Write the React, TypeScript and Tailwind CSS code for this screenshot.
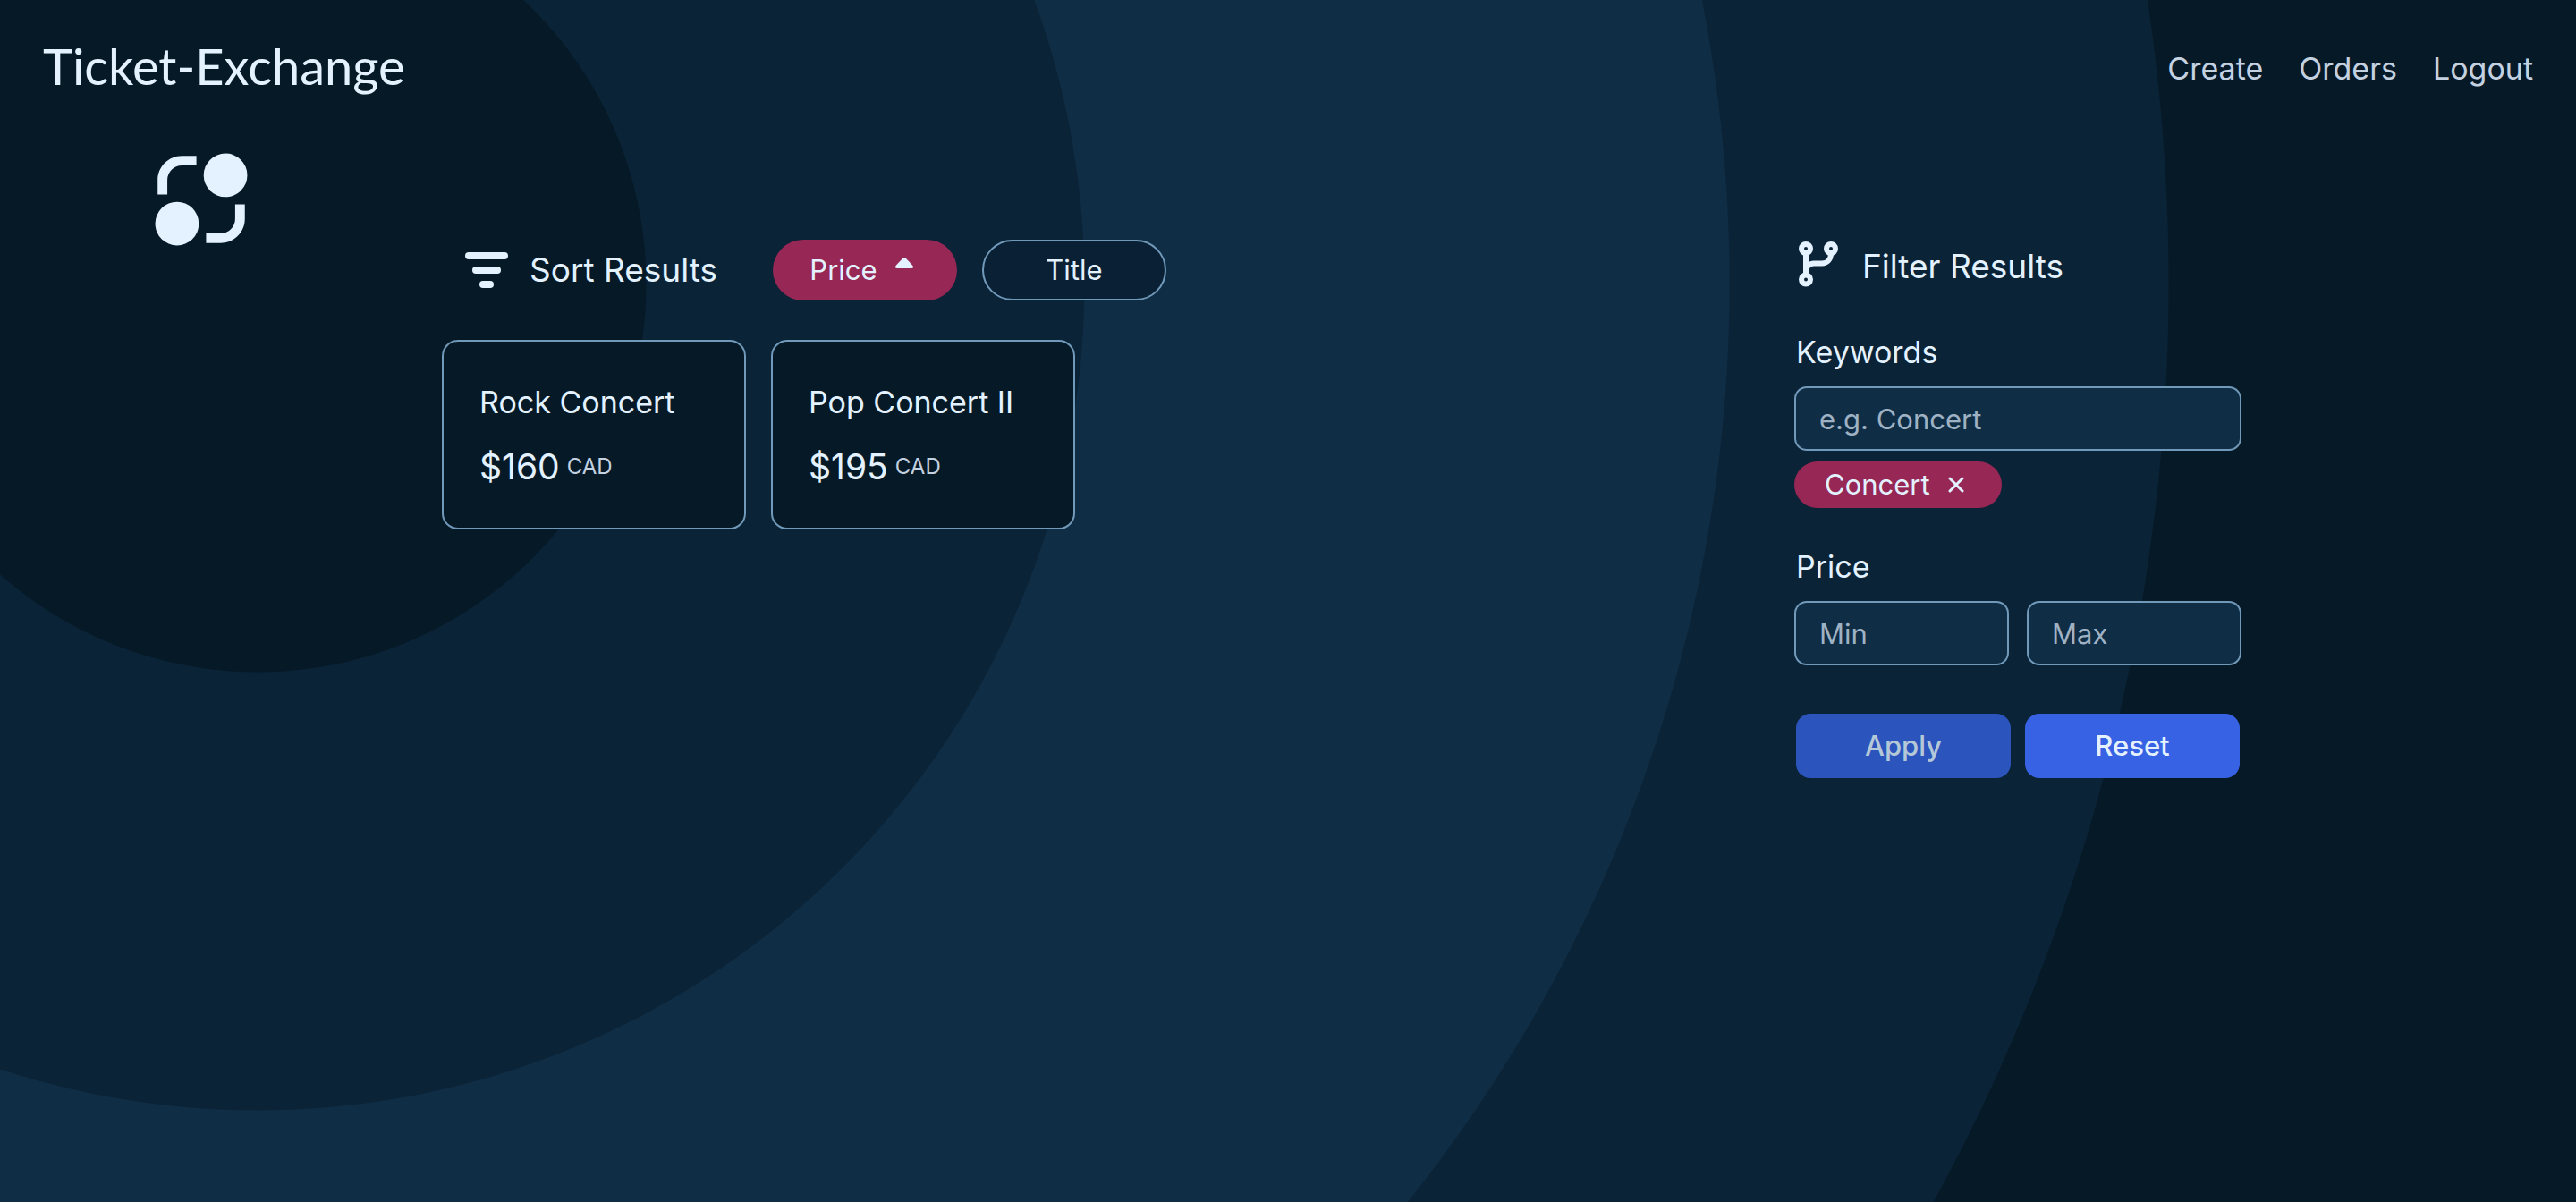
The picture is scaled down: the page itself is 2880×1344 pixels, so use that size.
import type { ReactNode } from "react";

const navLinks = ["Create", "Orders", "Logout"];
const tickets = [
  { title: "Rock Concert", price: 160 },
  { title: "Pop Concert II", price: 195 },
];

function ExchangeIcon() {
  return (
    <svg viewBox="0 0 24 24" className="size-[130px]" fill="currentColor" aria-hidden="true">
      <path d="M11 3H8C5.24 3 3 5.24 3 8V11H5V8C5 6.34 6.34 5 8 5H11V3Z" />
      <path d="M13 21H16C18.76 21 21 18.76 21 16V13H19V16C19 17.66 17.66 19 16 19H13V21Z" />
      <circle cx="17" cy="7" r="4.5" />
      <circle cx="7" cy="17" r="4.5" />
    </svg>
  );
}

function SortIcon() {
  return (
    <svg viewBox="0 0 48 40" className="h-10 w-12" fill="currentColor" aria-hidden="true">
      <rect x="0" y="0" width="48" height="8" rx="4" />
      <rect x="8" y="16" width="32" height="8" rx="4" />
      <rect x="16" y="32" width="16" height="8" rx="4" />
    </svg>
  );
}

function BranchIcon() {
  return (
    <svg viewBox="-3 0 50 56" className="h-14 w-[50px]" fill="none" stroke="currentColor" strokeWidth="6" aria-hidden="true">
      <circle cx="8" cy="8" r="5" />
      <circle cx="36" cy="8" r="5" />
      <circle cx="8" cy="42.500" r="5" />
      <path d="M8 13V38M8 35C8 28 12 24.500 17 24.500H26C32 24.500 36 20 36 13" />
    </svg>
  );
}

function Field({ id, label, placeholder }: { id: string; label?: string; placeholder: string }) {
  return (
    <input
      id={id}
      type="text"
      aria-label={label}
      placeholder={placeholder}
      className="h-[68px] w-full min-w-0 rounded-xl bg-[#102d46] px-[26px] text-[31px] ring-2 ring-[#7199b9] outline-none placeholder:text-[#9fb2c3]"
    />
  );
}

function Heading({ icon, children }: { icon: ReactNode; children: ReactNode }) {
  return (
    <h2 className="flex items-center gap-6 text-[37px] leading-[48px]">
      {icon}
      {children}
    </h2>
  );
}

export default function App() {
  return (
    <div className="min-h-screen bg-[#061926] bg-[radial-gradient(circle_at_10%_317px,#061926_434px,#0a2337_435px,#0a2337_924px,#102d46_925px,#102d46_1645px,#0a2337_1646px,#0a2337_2136px,#061926_2137px)] font-['Inter',sans-serif] text-[#e3f2fe]">
      <header className="flex items-start justify-between px-12 pt-11">
        <h1 className="font-['Lato',sans-serif] text-[56px] leading-[60px]">
          <a href="#home">Ticket-Exchange</a>
        </h1>
        <nav className="flex gap-10 text-[34px] leading-[66px] text-[#c3d1e0]">
          {navLinks.map((name) => (
            <a key={name} href={"#" + name.toLowerCase()}>{name}</a>
          ))}
        </nav>
      </header>

      <div className="grid grid-cols-[496px_1fr_496px] pt-12 pr-[376px]">
        <div className="pl-[160px]">
          <ExchangeIcon />
        </div>

        <main className="pt-[110px]">
          <div className="flex items-center gap-[62px] pl-6">
            <Heading icon={<SortIcon />}>Sort Results</Heading>
            <div className="flex gap-7">
              <button type="button" className="flex h-[68px] w-[206px] items-center justify-center gap-5 rounded-full bg-[#972755] pr-2 text-[31px]">
                Price
                <svg viewBox="0 0 20 12" className="mb-4 h-3 w-5" fill="currentColor" aria-hidden="true">
                  <path d="M8.300 .7Q10 -.7 11.700 .7L19.500 9Q21 12 18 12H2Q-1 12 .5 9Z" />
                </svg>
              </button>
              <button type="button" className="h-[68px] w-[206px] rounded-full border-2 border-[#7199b9] bg-[#0a2035] text-[31px]">
                Title
              </button>
            </div>
          </div>
          <ul className="mt-[46px] flex flex-wrap gap-8">
            {tickets.map((t) => (
              <li key={t.title} className="flex h-[208px] w-[336px] flex-col justify-center gap-5 rounded-2xl bg-[#061926] px-10 ring-2 ring-[#7199b9]">
                <h3 className="text-[34px] leading-[52px]">{t.title}</h3>
                <p className="flex items-center gap-2 text-[39px] leading-[52px]">
                  ${t.price}
                  <span className="text-[24px] text-[#c3d1e0]">CAD</span>
                </p>
              </li>
            ))}
          </ul>
        </main>

        <aside className="pt-[112px]">
          <Heading icon={<BranchIcon />}>Filter Results</Heading>
          <form>
            <label htmlFor="keywords" className="mt-10 mb-3 block text-[34px] leading-[56px]">Keywords</label>
            <Field id="keywords" placeholder="e.g. Concert" />
            <button type="button" className="mt-4 flex h-12 items-center gap-5 rounded-full bg-[#972755] pr-10 pl-8 text-[31px] ring-2 ring-[#972755]">
              Concert
              <svg viewBox="0 0 18 18" className="size-[18px]" fill="none" stroke="currentColor" strokeWidth="3" strokeLinecap="round" aria-hidden="true">
                <path d="M2 2L16 16M16 2L2 16" />
              </svg>
            </button>
            <h3 className="mt-10 mb-3 text-[34px] leading-[56px]">Price</h3>
            <div className="flex gap-6">
              <Field id="min-price" label="Minimum price" placeholder="Min" />
              <Field id="max-price" label="Maximum price" placeholder="Max" />
            </div>
            <div className="mt-14 flex gap-4 text-[31px] font-medium">
              <button type="submit" disabled className="h-[72px] flex-1 rounded-2xl bg-[#2b55bd] text-[#b5c8d8]">Apply</button>
              <button type="reset" className="h-[72px] flex-1 rounded-2xl bg-[#3762e3]">Reset</button>
            </div>
          </form>
        </aside>
      </div>
    </div>
  );
}
